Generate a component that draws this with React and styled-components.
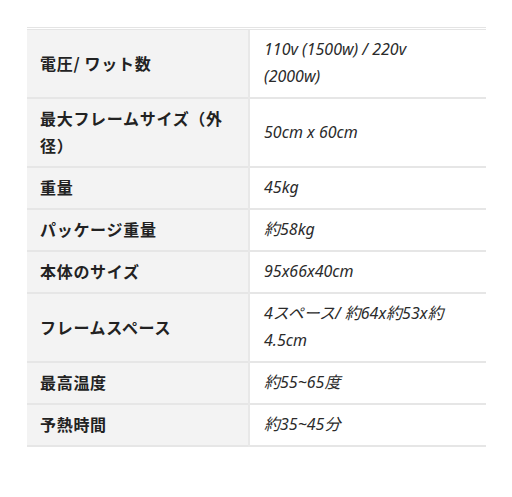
import React from "react";
import styled, { createGlobalStyle } from "styled-components";

const Global = createGlobalStyle`
  html, body { margin: 0; padding: 0; background: #ffffff; }
  body { font-family: "Noto Sans CJK JP", sans-serif; }
`;

const Page = styled.div`
  padding: 27px 26px 0 27px;
`;

const Table = styled.table`
  width: 459px;
  border-collapse: collapse;
  border-top: 3px double #e4e4e4;
`;

const Row = styled.tr`
  border-bottom: 2px solid #e6e6e6;
`;

const Label = styled.th`
  width: 222px;
  box-sizing: border-box;
  background: #f3f3f3;
  border-right: 2px solid #e8e8e8;
  padding: 6px 13px 7px;
  text-align: left;
  vertical-align: middle;
  font-family: "Noto Sans CJK JP", sans-serif;
  font-weight: 700;
  font-size: 16px;
  letter-spacing: 0.7px;
  line-height: 27px;
  color: #222;
`;

const Value = styled.td`
  padding: 6px 24px 7px 14px;
  vertical-align: middle;
  font-family: "Noto Sans", "Noto Sans CJK JP", sans-serif;
  font-style: italic;
  font-size: 16px;
  line-height: 27px;
  color: #2b2b2b;
`;

const specs = [
  ["電圧/ ワット数", "110v (1500w) / 220v (2000w)"],
  ["最大フレームサイズ（外径）", "50cm x 60cm"],
  ["重量", "45kg"],
  ["パッケージ重量", "約58kg"],
  ["本体のサイズ", "95x66x40cm"],
  ["フレームスペース", "4スペース/ 約64x約53x約4.5cm"],
  ["最高温度", "約55~65度"],
  ["予熱時間", "約35~45分"],
];

export default function App() {
  return (
    <>
      <Global />
      <Page>
        <Table>
          <tbody>
            {specs.map(([k, v]) => (
              <Row key={k}>
                <Label>{k}</Label>
                <Value>{v}</Value>
              </Row>
            ))}
          </tbody>
        </Table>
      </Page>
    </>
  );
}
